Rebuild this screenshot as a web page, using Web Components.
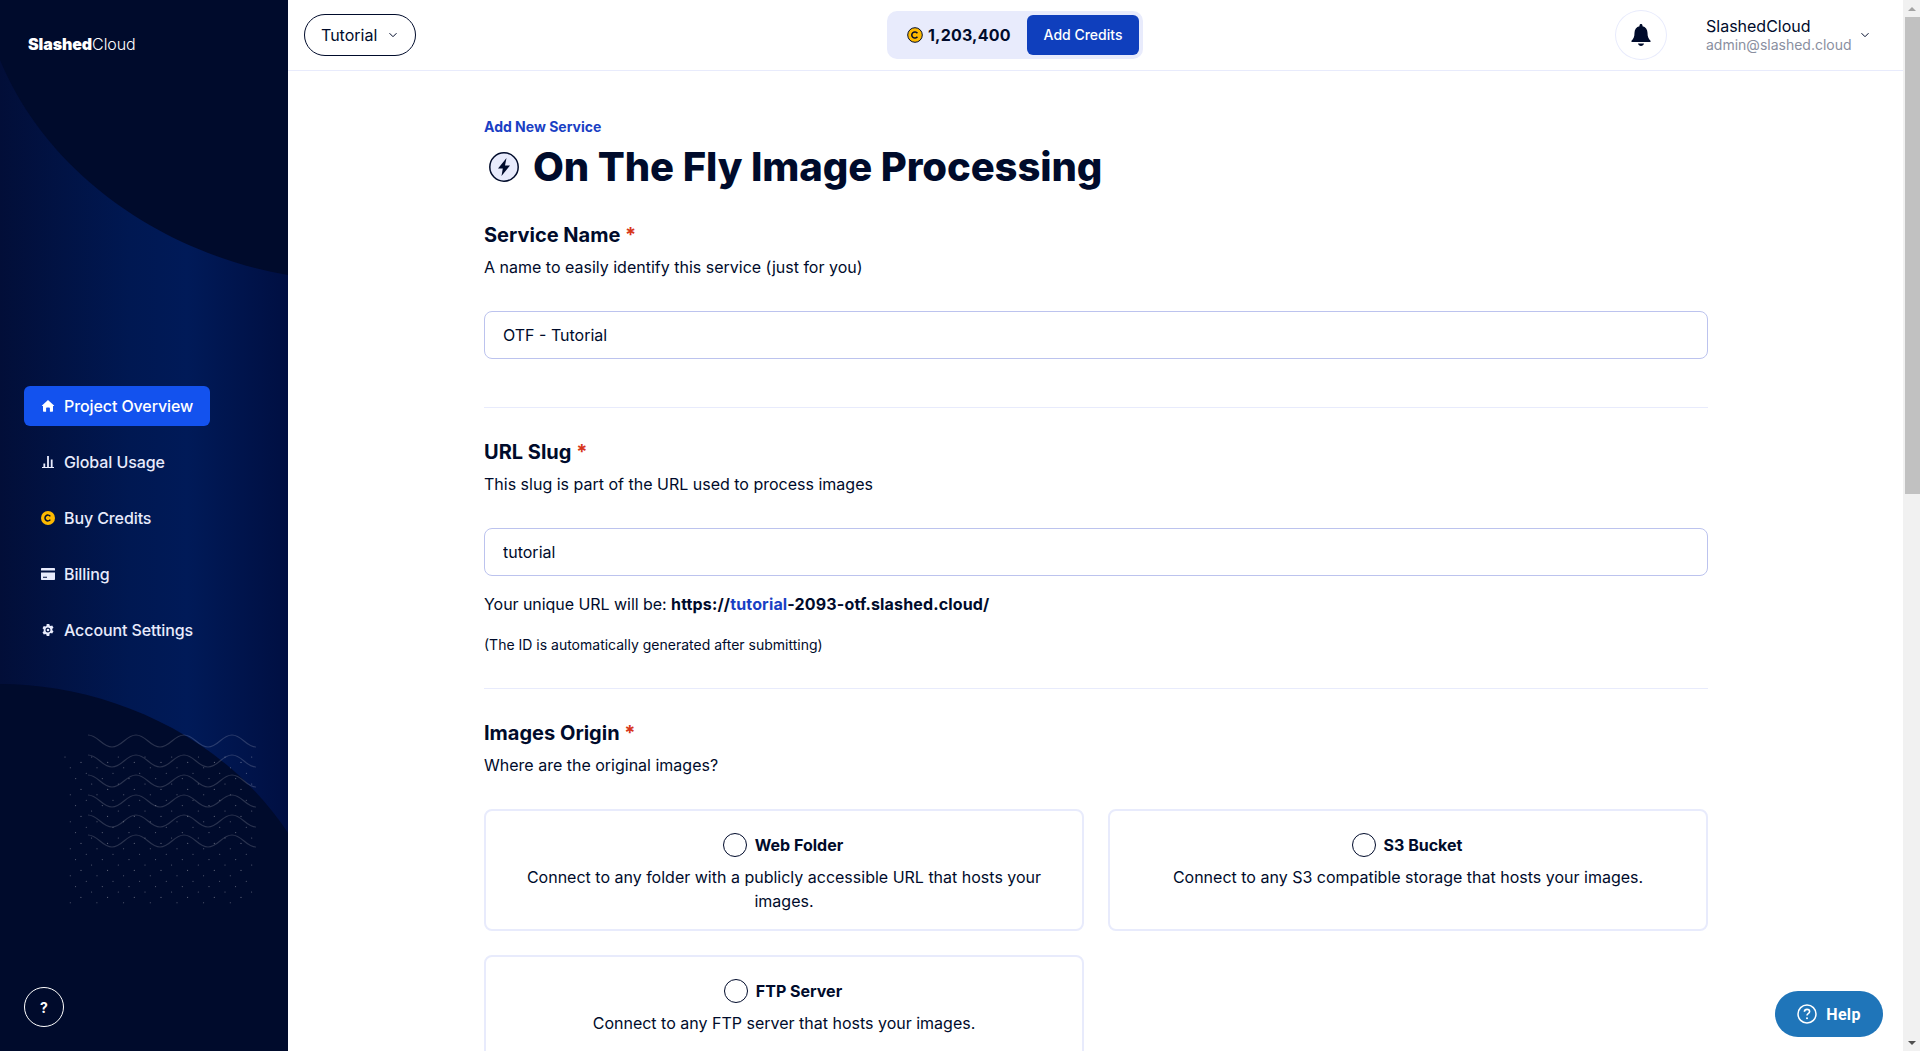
<!DOCTYPE html>
<html lang="en">
<head>
<meta charset="utf-8">
<title>On The Fly Image Processing</title>
<style>
    html, body { margin: 0; height: 100%; overflow: hidden; }
    body { font-family: Inter, "Noto Sans", sans-serif; color: #000b2b; background: #fff; }
</style>
</head>
<body>
<app-shell>
    <side-bar slot="side">
        <nav-item active label="Project Overview">
            <svg slot="icon" width="14" height="14" viewBox="0 0 14 14"><path fill="currentColor" d="M7 1 1 6.400c-.3.300-.1.700.3.700H2v4.900c0 .4.300.7.700.7h2.400V9.200c0-.4.300-.7.700-.7h2.400c.4 0 .7.300.7.700v3.500h2.400c.4 0 .7-.3.700-.7V7.100h.7c.4 0 .6-.4.300-.7L7 1Z"/></svg>
        </nav-item>
        <nav-item label="Global Usage">
            <svg slot="icon" width="14" height="14" viewBox="0 0 14 14"><path fill="currentColor" d="M1 12h12v1H1zM2.400 8.500h1.800V12H2.400zM6.100 1h1.800v11H6.100zM9.800 4.500h1.800V12H9.800z"/></svg>
        </nav-item>
        <nav-item label="Buy Credits">
            <svg slot="icon" width="14" height="14" viewBox="0 0 14 14"><circle cx="7" cy="7" r="7" fill="#fdb900"/><path fill="none" stroke="#000b2b" stroke-width="1.500" d="M9.300 5.400A2.900 2.900 0 1 0 9.300 8.600"/></svg>
        </nav-item>
        <nav-item label="Billing">
            <svg slot="icon" width="14" height="14" viewBox="0 0 14 14"><path fill="currentColor" d="M1 1h12c.6 0 1 .4 1 1v1.500H0V2c0-.6.400-1 1-1ZM0 5.500h14V12c0 .6-.4 1-1 1H1c-.6 0-1-.4-1-1V5.500Zm2 4.300v1h4v-1H2Z"/></svg>
        </nav-item>
        <nav-item label="Account Settings">
            <svg slot="icon" width="14" height="14" viewBox="0 0 14 14"><path fill="currentColor" fill-rule="evenodd" d="M5.700 1h2.600l.3 1.500 1.100.6 1.500-.5 1.300 2.200-1.200 1v1.400l1.200 1-1.300 2.200-1.500-.5-1.100.6L8.300 13H5.700l-.3-1.500-1.100-.6-1.500.5-1.300-2.200 1.200-1V6.300l-1.200-1 1.300-2.200 1.500.5 1.100-.6L5.700 1ZM7 4.500a2.500 2.500 0 1 0 0 5 2.500 2.500 0 0 0 0-5Z"/><circle cx="7" cy="7" r="1.300" fill="currentColor"/></svg>
        </nav-item>
    </side-bar>
    <top-bar slot="top"></top-bar>

    <service-form slot="main">
        <form-section label="Service Name" hint="A name to easily identify this service (just for you)">
            <text-field value="OTF - Tutorial"></text-field>
        </form-section>
        <form-section label="URL Slug" hint="This slug is part of the URL used to process images">
            <text-field value="tutorial"></text-field>
            <url-note></url-note>
        </form-section>
        <form-section last label="Images Origin" hint="Where are the original images?">
            <origin-grid>
                <origin-card name="Web Folder">Connect to any folder with a publicly accessible URL that hosts your<br>images.</origin-card>
                <origin-card name="S3 Bucket">Connect to any S3 compatible storage that hosts your images.</origin-card>
                <origin-card name="FTP Server">Connect to any FTP server that hosts your images.</origin-card>
            </origin-grid>
        </form-section>
    </service-form>

    <help-button slot="overlay"></help-button>
    <page-scrollbar slot="scroll"></page-scrollbar>
</app-shell>

<script>
class AppShell extends HTMLElement {
    constructor() {
        super();
        this.attachShadow({mode: "open"});
        this.shadowRoot.innerHTML = `
            <style>
                :host { display: flex; height: 1051px; position: relative; overflow: hidden; }
                .center { flex: 1; min-width: 0; display: flex; flex-direction: column; }
                .body { flex: 1; min-height: 0; overflow: hidden; }
            </style>
            <slot name="side"></slot>
            <div class="center">
                <slot name="top"></slot>
                <div class="body"><slot name="main"></slot></div>
            </div>
            <slot name="scroll"></slot>
            <slot name="overlay"></slot>
        `;
    }
}

class SideBar extends HTMLElement {
    constructor() {
        super();
        this.attachShadow({mode: "open"});
        this.shadowRoot.innerHTML = `
            <style>
                :host {
                    display: flex; flex-direction: column; flex: none; box-sizing: border-box;
                    width: 288px; height: 1051px; padding: 0 24px 24px;
                    position: relative; overflow: hidden; color: #fff;
                    background: linear-gradient(90deg, #020e38 0%, #001852 45%, #001a58 65%, #000f42 100%);
                }
                .art { position: absolute; left: 0; top: 0; }
                .logo { position: relative; margin: 33px 0 0 4px; font-size: 16px; line-height: 22px; font-weight: 300; letter-spacing: -.1px; }
                .logo b { font-weight: 900; }
                nav { position: relative; margin-top: 331px; display: flex; flex-direction: column; align-items: flex-start; gap: 16px; }
                .ask {
                    position: relative; margin-top: auto; box-sizing: border-box; width: 40px; height: 40px;
                    border: 1px solid #fff; border-radius: 50%;
                    display: flex; align-items: center; justify-content: center;
                    font-size: 14px; font-weight: 700;
                }
            </style>
            <svg class="art" width="288" height="1051" viewBox="0 0 288 1051">
                <path fill="#000b2c" d="M0 0H288V275C170 255 50 180 0 60Z"/>
                <path fill="#000b2c" d="M0 684C100 684 220 730 288 833V1051H0Z"/>
                <g class="dots" fill="#fff"></g>
                <g class="waves" fill="none" stroke="#fff" stroke-opacity=".16" stroke-width="1.200"></g>
            </svg>
            <div class="logo"><b>Slashed</b>Cloud</div>
            <nav><slot></slot></nav>
            <div class="ask">?</div>
        `;
        const ns = "http://www.w3.org/2000/svg";
        const waves = this.shadowRoot.querySelector(".waves");
        for (let i = 0; i < 6; i++) {
            const y = 735 + i * 20;
            let d = `M88 ${y}`;
            for (let k = 0; k < 7; k++) {
                const x = 88 + k * 24;
                const to = k % 2 ? y : y + 12;
                const from = k % 2 ? y + 12 : y;
                // first half wave starts falling from a crest
                d += ` C${x + 10} ${from} ${x + 14} ${to} ${x + 24} ${to}`;
            }
            const p = document.createElementNS(ns, "path");
            p.setAttribute("d", d);
            waves.appendChild(p);
        }
        const dots = this.shadowRoot.querySelector(".dots");
        for (let r = 0; r < 28; r++) {
            const y = 757 + r * 5.4;
            let x = 65 + ((r * 16) % 26.67);
            for (; x < 254; x += 26.67) {
                const c = document.createElementNS(ns, "circle");
                c.setAttribute("cx", x.toFixed(1));
                c.setAttribute("cy", y.toFixed(1));
                c.setAttribute("r", ".55");
                c.setAttribute("fill-opacity", ".38");
                dots.appendChild(c);
            }
        }
    }
}

class NavItem extends HTMLElement {
    constructor() {
        super();
        this.attachShadow({mode: "open"});
        this.shadowRoot.innerHTML = `
            <style>
                :host {
                    display: inline-flex; align-items: center; gap: 9px; box-sizing: border-box;
                    height: 40px; padding: 0 17px; border-radius: 6px;
                    font-size: 16px; font-weight: 500; letter-spacing: -.1px; color: #e8ebfc;
                }
                :host([active]) { background: #1352ee; color: #fff; }
                .icon { width: 14px; height: 14px; display: flex; }
            </style>
            <span class="icon"><slot name="icon"></slot></span>
            <span>${this.getAttribute("label")}</span>
        `;
    }
}

class TopBar extends HTMLElement {
    constructor() {
        super();
        this.attachShadow({mode: "open"});
        const chevron = `<svg width="10" height="6" viewBox="0 0 10 6"><path d="M1.500 1.200 5 4.700l3.500-3.500" fill="none" stroke="#000b2b" stroke-width="1"/></svg>`;
        this.shadowRoot.innerHTML = `
            <style>
                :host {
                    display: flex; align-items: center; justify-content: space-between; flex: none;
                    box-sizing: border-box; height: 71px; padding: 0 33px 1px 16px;
                    border-bottom: 1px solid #e8ebfc; background: #fff;
                }
                .project {
                    box-sizing: border-box; width: 112px; height: 42px; padding: 0 17px 0 16px;
                    border: 1.500px solid #000b2b; border-radius: 21px;
                    display: flex; align-items: center; justify-content: space-between;
                    font-size: 16px;
                }
                .credits {
                    box-sizing: border-box; width: 256px; height: 48px; padding: 4px; margin-right: 1px;
                    background: #e8ebfc; border-radius: 10px;
                    display: flex; align-items: center; justify-content: space-between;
                }
                .balance { display: flex; align-items: center; gap: 5px; margin-left: 16px; font-size: 16px; font-weight: 700; letter-spacing: .2px; }
                .add {
                    width: 112px; height: 40px; border-radius: 6px; background: #0f3fbd; color: #fff;
                    display: flex; align-items: center; justify-content: center; font-size: 14px; font-weight: 500;
                }
                .user { display: flex; align-items: center; width: 255px; }
                .bell {
                    box-sizing: border-box; width: 52px; height: 50px; border: 1px solid #e8ebfc; border-radius: 50%;
                    display: flex; align-items: center; justify-content: center;
                }
                .who { margin-left: 39px; flex: 1; }
                .who div { font-size: 16px; line-height: 20px; }
                .who small { display: block; font-size: 14px; line-height: 17px; color: #8a8f9f; }
            </style>
            <div class="project"><span>Tutorial</span>${chevron}</div>
            <div class="credits">
                <div class="balance">
                    <svg width="16" height="16" viewBox="0 0 16 16"><circle cx="8" cy="8" r="7.300" fill="#fdb900" stroke="#000b2b" stroke-width="1"/><path fill="none" stroke="#000b2b" stroke-width="1.500" d="M10.400 6.200A3.100 3.100 0 1 0 10.400 9.800"/></svg>
                    <span>1,203,400</span>
                </div>
                <div class="add">Add Credits</div>
            </div>
            <div class="user">
                <div class="bell">
                    <svg width="20" height="24" viewBox="0 0 20 24"><path fill="#000b2b" d="M10 1c.9 0 1.500.6 1.500 1.500v.7c3.100.7 5 3.300 5 6.500 0 4.300 1 6 3 8v1.300H.5V17.700c2-2 3-3.700 3-8 0-3.200 1.900-5.800 5-6.500v-.7C8.500 1.600 9.100 1 10 1Z"/><path fill="#000b2b" d="M7 20.500h6c-.3 1.500-1.500 2.500-3 2.500s-2.700-1-3-2.500Z"/></svg>
                </div>
                <div class="who"><div>SlashedCloud</div><small>admin@slashed.cloud</small></div>
                ${chevron}
            </div>
        `;
    }
}

class ServiceForm extends HTMLElement {
    constructor() {
        super();
        this.attachShadow({mode: "open"});
        this.shadowRoot.innerHTML = `
            <style>
                :host { display: block; width: 1224px; margin: 0 0 0 196px; padding-top: 46px; }
                .crumb { font-size: 14px; line-height: 20px; font-weight: 700; color: #1a3fc4; }
                h1 { margin: 6px 0 0; display: flex; align-items: center; gap: 14px; padding-left: 5px; font-size: 40px; line-height: 48px; font-weight: 800; letter-spacing: -.1px; }
            </style>
            <div class="crumb">Add New Service</div>
            <h1>
                <svg width="30" height="30" viewBox="0 0 30 30" style="flex:none"><circle cx="15" cy="15" r="14.200" fill="#e8ebfc" stroke="#000b2b" stroke-width="1.500"/><path fill="#000b2b" d="M17.500 6 9 16.500H13.800L12.500 24 21 13.500H16Z"/></svg>
                <span>On The Fly Image Processing</span>
            </h1>
            <slot></slot>
        `;
    }
}

class FormSection extends HTMLElement {
    constructor() {
        super();
        this.attachShadow({mode: "open"});
        this.shadowRoot.innerHTML = `
            <style>
                :host { display: block; padding: 30px 0 48px; border-bottom: 1px solid #e8ebfc; }
                :host([last]) { border-bottom: 0; padding-bottom: 0; }
                .label { font-size: 20px; line-height: 28px; font-weight: 700; }
                .label i { font-style: normal; color: #d8371c; }
                .hint { margin: 6px 0 32px; font-size: 16px; line-height: 24px; }
            </style>
            <div class="label">${this.getAttribute("label")} <i>*</i></div>
            <div class="hint">${this.getAttribute("hint")}</div>
            <slot></slot>
        `;
    }
}

class TextField extends HTMLElement {
    constructor() {
        super();
        this.attachShadow({mode: "open"});
        this.shadowRoot.innerHTML = `
            <style>
                :host { display: block; }
                input {
                    display: block; box-sizing: border-box; width: 100%; height: 48px; padding: 0 18px;
                    border: 1px solid #bcc3ee; border-radius: 8px; outline: 0; background: #fff;
                    font: 16px Inter, sans-serif; color: #000b2b;
                }
            </style>
            <input type="text" value="${this.getAttribute("value")}">
        `;
    }
}

class UrlNote extends HTMLElement {
    constructor() {
        super();
        this.attachShadow({mode: "open"});
        this.shadowRoot.innerHTML = `
            <style>
                :host { display: block; margin: 16px 0 -15px; font-size: 16px; line-height: 24px; letter-spacing: -.05px; }
                b { font-weight: 700; letter-spacing: .15px; }
                b span { color: #1a3fc4; }
                small { display: block; margin-top: 19px; font-size: 14px; line-height: 20px; letter-spacing: 0; }
            </style>
            Your unique URL will be: <b>https://<span>tutorial</span>-2093-otf.slashed.cloud/</b>
            <small>(The ID is automatically generated after submitting)</small>
        `;
    }
}

class OriginGrid extends HTMLElement {
    constructor() {
        super();
        this.attachShadow({mode: "open"});
        this.shadowRoot.innerHTML = `
            <style>
                :host { display: grid; grid-template-columns: 1fr 1fr; gap: 24px; }
            </style>
            <slot></slot>
        `;
    }
}

class OriginCard extends HTMLElement {
    constructor() {
        super();
        this.attachShadow({mode: "open"});
        this.shadowRoot.innerHTML = `
            <style>
                :host {
                    display: block; box-sizing: border-box; padding: 22px 20px 16px; min-height: 122px;
                    border: 2px solid #e8ebfc; border-radius: 8px; text-align: center;
                    font-size: 16px; line-height: 24px;
                }
                .head { display: flex; align-items: center; justify-content: center; gap: 8px; margin-bottom: 8px; padding-right: 2px; font-weight: 700; }
                .radio { box-sizing: border-box; width: 24px; height: 24px; border: 1.500px solid #000b2b; border-radius: 50%; }
            </style>
            <div class="head"><span class="radio"></span><span>${this.getAttribute("name")}</span></div>
            <slot></slot>
        `;
    }
}

class HelpButton extends HTMLElement {
    constructor() {
        super();
        this.attachShadow({mode: "open"});
        this.shadowRoot.innerHTML = `
            <style>
                :host {
                    position: absolute; left: 1775px; top: 991px; width: 108px; height: 46px; border-radius: 23px;
                    background: #1f75b9; color: #fff; display: flex; align-items: center; justify-content: center; gap: 9px;
                    font: 700 16px Roboto, sans-serif; letter-spacing: .3px;
                }
            </style>
            <svg width="20" height="20" viewBox="0 0 20 20"><circle cx="10" cy="10" r="9" fill="none" stroke="#fff" stroke-width="1.500"/><path d="M7.400 7.700C7.500 6.200 8.600 5.400 10 5.400c1.500 0 2.600.9 2.600 2.200 0 1.100-.7 1.600-1.400 2.100-.7.500-1.200.9-1.200 1.900" fill="none" stroke="#fff" stroke-width="1.600"/><circle cx="10" cy="14.200" r="1" fill="#fff"/></svg>
            <span>Help</span>
        `;
    }
}

class PageScrollbar extends HTMLElement {
    constructor() {
        super();
        this.attachShadow({mode: "open"});
        this.shadowRoot.innerHTML = `
            <style>
                :host { display: flex; flex-direction: column; flex: none; width: 17px; height: 1051px; background: #f1f1f1; }
                .btn { height: 17px; flex: none; display: flex; align-items: center; justify-content: center; }
                .up { border: 4px solid transparent; border-top: 0; border-bottom: 4px solid #a3a3a3; width: 0; height: 0; }
                .down { border: 4px solid transparent; border-bottom: 0; border-top: 4px solid #505050; width: 0; height: 0; }
                .track { flex: 1; padding-left: 2px; }
                .thumb { height: 477px; background: #c1c1c1; }
            </style>
            <div class="btn"><div class="up"></div></div>
            <div class="track"><div class="thumb"></div></div>
            <div class="btn"><div class="down"></div></div>
        `;
    }
}

customElements.define("app-shell", AppShell);
customElements.define("side-bar", SideBar);
customElements.define("nav-item", NavItem);
customElements.define("top-bar", TopBar);
customElements.define("service-form", ServiceForm);
customElements.define("form-section", FormSection);
customElements.define("text-field", TextField);
customElements.define("url-note", UrlNote);
customElements.define("origin-grid", OriginGrid);
customElements.define("origin-card", OriginCard);
customElements.define("help-button", HelpButton);
customElements.define("page-scrollbar", PageScrollbar);
</script>
</body>
</html>
